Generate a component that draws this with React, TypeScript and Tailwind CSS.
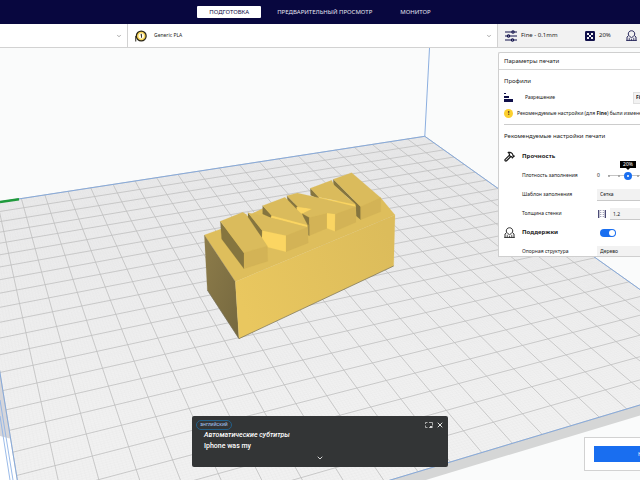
import { ChevronDown, Hammer, X } from "lucide-react";
import type { ReactNode } from "react";

type Point = [number, number];

/* Screen corners of the 220 mm build plate and its perspective coefficients. */
const BACK: Point = [424.8, 136.3];
const LEFT: Point = [-27, 206];
const FRONT: Point = [34.6, 587];
const RIGHT: Point = [754, 370.7];

const d1: Point = [LEFT[0] - FRONT[0], LEFT[1] - FRONT[1]];
const d2: Point = [RIGHT[0] - FRONT[0], RIGHT[1] - FRONT[1]];
const sum: Point = [
  BACK[0] - LEFT[0] + FRONT[0] - RIGHT[0],
  BACK[1] - LEFT[1] + FRONT[1] - RIGHT[1],
];
const det = d1[0] * d2[1] - d2[0] * d1[1];
const g = (sum[0] * d2[1] - d2[0] * sum[1]) / det;
const h = (d1[0] * sum[1] - sum[0] * d1[1]) / det;

function project(u: number, v: number): string {
  const w = 1 + g * u + h * v;
  const x = BACK[0] + (LEFT[0] - BACK[0] + g * LEFT[0]) * u + (RIGHT[0] - BACK[0] + h * RIGHT[0]) * v;
  const y = BACK[1] + (LEFT[1] - BACK[1] + g * LEFT[1]) * u + (RIGHT[1] - BACK[1] + h * RIGHT[1]) * v;
  return `${(x / w).toFixed(2)} ${(y / w).toFixed(2)}`;
}

function gridPath(cells: number): string {
  const parts: string[] = [];
  for (let i = 0; i <= cells; i++) {
    const t = i / cells;
    parts.push(`M${project(t, 0)}L${project(t, 1)}M${project(0, t)}L${project(1, t)}`);
  }
  return parts.join("");
}

const MAJOR = gridPath(22);
const MINOR = gridPath(220);

const BASE = "#debe5c";
const TOP = "#dabb5c";
const SIDE = "#d3b356";
const DARK = "#85753f";
const LIT = "#fbd562";

const MODEL: { points: string; fill: string }[] = [
  { points: "43,210 93,192 240,120 572,98 615,150 136,350", fill: BASE },
  { points: "43,210 136,350 147,521 52,375", fill: "url(#leftFace)" },
  { points: "136,350 615,150 611,303 147,521", fill: "url(#frontFace)" },
  { points: "430,43 512,125 512,164 499,153 497,118 430,60", fill: DARK },
  { points: "430,43 485,23 572,98 512,125", fill: TOP },
  { points: "512,125 572,98 572,140 512,164", fill: SIDE },
  { points: "361,70 388,96 386,102 362,91", fill: DARK },
  { points: "361,70 425,46 432,60 495,118 386,97", fill: TOP },
  { points: "386,97 495,119 497,126 388,102", fill: LIT },
  { points: "291,92 322,124 320,138 293,112", fill: DARK },
  { points: "320,126 367,131 337,146 320,137", fill: LIT },
  { points: "291,92 322,84 385,98 497,125 436,148 408,144 358,158 337,146 367,132 322,124", fill: TOP },
  { points: "337,146 358,158 358,212 353,183 338,167", fill: DARK },
  { points: "358,158 411,145 411,190 358,212", fill: SIDE },
  { points: "411,145 436,148 435,199 411,190", fill: LIT },
  { points: "436,148 497,125 498,172 435,199", fill: SIDE },
  { points: "218,122 245,151 243,158 218,147", fill: DARK },
  { points: "218,122 285,97 337,150 353,181 245,152", fill: TOP },
  { points: "245,152 353,181 353,187 243,158", fill: LIT },
  { points: "353,181 358,178 358,212 354,210", fill: "#a38e4c" },
  { points: "174,143 217,197 216,219 174,165", fill: DARK },
  { points: "174,143 205,150 270,165 352,187 288,212 217,197", fill: TOP },
  { points: "217,197 288,212 288,260 232,246 216,219", fill: LIT },
  { points: "288,212 352,187 355,234 288,260", fill: SIDE },
  { points: "91,169 162,264 162,311 95,222", fill: DARK },
  { points: "91,169 158,142 168,148 232,243 162,264", fill: TOP },
  { points: "162,264 232,243 233,289 162,311", fill: SIDE },
];

function Scene() {
  return (
    <svg
      className="absolute inset-0 h-full w-full"
      viewBox="0 48 640 432"
      preserveAspectRatio="xMinYMin slice"
      role="img"
      aria-label="3D"
    >
      <defs>
        <linearGradient id="leftFace" x1="0" y1="0" x2="1" y2="1">
          <stop offset="0" stopColor="#8d7c4a" />
          <stop offset="1" stopColor="#75683f" />
        </linearGradient>
        <linearGradient id="frontFace" x1="0" y1="0.6" x2="1" y2="0.3">
          <stop offset="0" stopColor="#e9c75f" />
          <stop offset="1" stopColor="#dcbc5b" />
        </linearGradient>
        <linearGradient id="plate" x1="0" y1="0" x2="0" y2="1">
          <stop offset="0" stopColor="#eaeaeb" />
          <stop offset="0.6" stopColor="#f1f1f1" />
        </linearGradient>
      </defs>
      <rect y="48" width="640" height="432" fill="#fafbfb" />
      <path d="M0 436L14 440L18 480H0Z" fill="#ffffff" />
      <path d="M0 373L0 436L12 439L14 460Z" fill="#d6d6da" />
      <path d="M754 370.7V381L34.6 598V587Z" fill="#d5d6d6" />
      <path d={`M${BACK}L${RIGHT}L${FRONT}L${LEFT}Z`} fill="url(#plate)" />
      <path d={MINOR} stroke="#d9d9d9" strokeWidth="0.3" fill="none" opacity="0.35" />
      <path d={MAJOR} stroke="#bfbfbf" strokeWidth="0.8" fill="none" />
      <path
        d={`M${BACK}L${RIGHT}L${FRONT}L${LEFT}ZM${BACK}L429.5 48`}
        stroke="#7fa6dc"
        strokeWidth="0.9"
        fill="none"
      />
      <path d="M0 400L13 480M0 416L10 480" stroke="#8fb3e6" strokeWidth="0.9" fill="none" />
      <path d="M0 202L19 199.3" stroke="#1f9a3c" strokeWidth="2.4" />
      <g transform="translate(190 165) scale(0.33333)">
        {MODEL.map((face) => (
          <polygon key={face.points} points={face.points} fill={face.fill} stroke={face.fill} strokeWidth="0.6" />
        ))}
        <path d="M52 375L147 521L611 303" fill="none" stroke="#6f6a52" strokeWidth="2" />
      </g>
    </svg>
  );
}

function SlidersIcon() {
  return (
    <svg className="h-3 w-3 shrink-0" viewBox="0 0 24 24" fill="none" stroke="#10104a" strokeWidth="2.2">
      <path d="M0 4H24M0 12H24M0 20H24" />
      <g fill="#10104a" stroke="none">
        <circle cx="16" cy="4" r="3.4" />
        <circle cx="7" cy="12" r="3.4" />
        <circle cx="15" cy="20" r="3.4" />
      </g>
      <circle cx="16" cy="4" r="1" fill="#f2f2f2" stroke="none" />
      <circle cx="7" cy="12" r="1" fill="#f2f2f2" stroke="none" />
      <circle cx="15" cy="20" r="1" fill="#f2f2f2" stroke="none" />
    </svg>
  );
}

function InfillIcon() {
  return (
    <svg className="h-[10px] w-[10px] shrink-0" viewBox="0 0 20 20">
      <rect width="20" height="20" rx="2.5" fill="#10104a" />
      <g fill="#f2f2f2">
        <rect x="8" y="8" width="4" height="4" />
        <rect x="4" y="4" width="4" height="4" />
        <rect x="12" y="4" width="4" height="4" />
        <rect x="4" y="12" width="4" height="4" />
        <rect x="12" y="12" width="4" height="4" />
      </g>
    </svg>
  );
}

function SupportIcon({ color }: { color: string }) {
  return (
    <svg className="h-[11px] w-[11px] shrink-0" viewBox="0 0 22 22" fill="none" stroke={color} strokeWidth="1.8">
      <path d="M11 1.500C15 1.500 17.500 4.500 17.500 8C17.500 10 16.500 11.500 15 12.500L11 15.500L7 12.500C5.500 11.500 4.500 10 4.500 8C4.500 4.500 7 1.500 11 1.500Z" />
      <path d="M0.500 20.800H21.500M5 11.500L2 14V21M17 11.500L20 14V21" />
      <path d="M6.500 15.500V21M11 18V21M15.500 15.500V21" strokeWidth="1.400" />
    </svg>
  );
}

function SpoolIcon() {
  return (
    <svg className="h-3 w-3 shrink-0" viewBox="0 0 24 24">
      <path d="M1.500 23V12" stroke="#2a2618" strokeWidth="2" />
      <circle cx="12.500" cy="12" r="9.800" fill="#f7d558" stroke="#2a2618" strokeWidth="2.500" />
      <circle cx="12.500" cy="12" r="5.500" fill="#fffbe8" />
      <path d="M11 9.800L13 8.500V15.500" fill="none" stroke="#222222" strokeWidth="1.800" />
    </svg>
  );
}

function WallIcon() {
  return (
    <svg className="h-2 w-2 shrink-0" viewBox="0 0 16 16" fill="none" stroke="#10104a">
      <path d="M1.500 0V16M14.500 0V16" strokeWidth="2" />
      <path d="M5.500 0V16M10.500 0V16" strokeWidth="1" strokeDasharray="2 2" />
    </svg>
  );
}

function Row({ icon, children }: { icon?: ReactNode; children: ReactNode }) {
  return (
    <div className="flex h-[19px] items-center">
      <span className="flex w-[18px] shrink-0 items-center">{icon}</span>
      {children}
    </div>
  );
}

const LABEL = "w-[75px] shrink-0 text-[5px]";
const FIELD = "h-3 w-24 appearance-none border-b border-[#c9c9c9] bg-[#f2f2f2] px-[3px] pt-px text-[5px]";

function SettingsPanel() {
  return (
    <section className="ml-auto w-[142px] overflow-hidden rounded-tl-xs border border-r-0 border-[#cfcfcf] bg-white whitespace-nowrap text-[#1a1a1a]">
      <h2 className="flex h-[17px] items-center border-b border-[#d6d6d6] pl-[5px] text-[6px]">Параметры печати</h2>
      <div className="h-[186px] w-64 overflow-hidden pl-[5px]">
        <h3 className="flex h-[22px] items-center text-[6px]">Профили</h3>
        <div className="flex h-[11px] items-center">
          <svg className="mr-3 h-[9px] w-[9px] shrink-0" viewBox="0 0 9 9" fill="#10104a">
            <path d="M0 0H2V1H0ZM0 3H5V5H0ZM0 6H9V9H0Z" />
          </svg>
          <label htmlFor="resolution" className="w-[108px] shrink-0 text-[5px]">
            Разрешение
          </label>
          <select
            id="resolution"
            className="h-3 w-16 appearance-none border border-[#e0e0e0] bg-[#f2f2f2] px-[2px] text-[5px] font-bold"
          >
            <option>Fine</option>
          </select>
        </div>
        <p className="flex h-[21px] items-center gap-1 text-[5px]">
          <span className="flex h-[9px] w-[9px] items-center justify-center rounded-full bg-[#fcd02f] text-[6px] font-bold">
            !
          </span>
          <span>
            Рекомендуемые настройки (для <b>Fine</b>) были изменены.
          </span>
        </p>
        <h3 className="flex h-[23px] items-center border-t border-[#cccccc] text-[6px]">
          Рекомендуемые настройки печати
        </h3>
        <Row icon={<Hammer className="h-[11px] w-[11px]" strokeWidth={2.6} />}>
          <h4 className="text-[6px] font-bold">Прочность</h4>
        </Row>
        <Row>
          <label htmlFor="density" className={LABEL}>
            Плотность заполнения
          </label>
          <span className="w-2 shrink-0 text-[5px]">0</span>
          <div className="relative h-2 w-[103px] shrink-0">
            <div className="absolute inset-x-[3px] top-[3px] flex h-[2px] items-center justify-between bg-[linear-gradient(#c4c4c4,#c4c4c4)] bg-[length:100%_1px] bg-center bg-no-repeat">
              {Array.from({ length: 11 }, (_, i) => (
                <span key={i} className="h-[2px] w-[2px] rounded-full bg-[#9a9a9a]" />
              ))}
            </div>
            <input
              id="density"
              type="range"
              min={0}
              max={100}
              defaultValue={20}
              className="absolute inset-0 h-2 w-full appearance-none bg-transparent [&::-webkit-slider-thumb]:h-2 [&::-webkit-slider-thumb]:w-2 [&::-webkit-slider-thumb]:appearance-none [&::-webkit-slider-thumb]:rounded-full [&::-webkit-slider-thumb]:border-[3px] [&::-webkit-slider-thumb]:border-[#196ef0] [&::-webkit-slider-thumb]:bg-white"
            />
            <output
              htmlFor="density"
              className="absolute bottom-3 left-[15px] flex h-[7px] w-4 items-center justify-center bg-black text-[5px] leading-[7px] text-white after:absolute after:top-full after:border-x-2 after:border-t-2 after:border-x-transparent after:border-t-black"
            >
              20%
            </output>
          </div>
        </Row>
        <Row>
          <label htmlFor="pattern" className={LABEL}>
            Шаблон заполнения
          </label>
          <select id="pattern" className={FIELD}>
            <option>Сетка</option>
          </select>
        </Row>
        <Row>
          <label htmlFor="walls" className={LABEL}>
            Толщина стенки
          </label>
          <span className="flex w-[13px] shrink-0 pl-px">
            <WallIcon />
          </span>
          <input id="walls" defaultValue="1.2" className={FIELD} />
        </Row>
        <Row icon={<SupportIcon color="#1a1a1a" />}>
          <label htmlFor="supports" className="w-[78px] shrink-0 text-[6px] font-bold">
            Поддержки
          </label>
          <input
            id="supports"
            type="checkbox"
            defaultChecked
            className="flex h-2 w-4 appearance-none items-center justify-end rounded-full bg-[#196ef0] px-px before:h-[6px] before:w-[6px] before:rounded-full before:bg-white"
          />
        </Row>
        <Row>
          <label htmlFor="structure" className={LABEL}>
            Опорная структура
          </label>
          <select id="structure" className={FIELD}>
            <option>Дерево</option>
          </select>
        </Row>
      </div>
    </section>
  );
}

function Captions() {
  return (
    <aside className="absolute bottom-[13px] left-1/2 h-[51px] w-64 -translate-x-1/2 rounded-xs bg-[#333536] px-1 pt-1 font-[family-name:Roboto,sans-serif] text-white">
      <div className="flex h-[10px] items-center">
        <span className="flex h-[10px] w-[36px] items-center justify-center rounded-full border border-[#23608a] text-[5px] text-[#a9c7f5]">
          английский
        </span>
        <button type="button" aria-label="Развернуть" className="ml-auto">
          <svg className="h-2 w-2" viewBox="0 0 16 16" fill="none" stroke="#d4d4d4" strokeWidth="1.500">
            <path d="M1 6V3H5M8 3H15V9M1 9V13H5M8 13H10" />
            <rect x="10" y="10" width="5" height="4" fill="#d4d4d4" stroke="none" />
          </svg>
        </button>
        <button type="button" aria-label="Закрыть" className="ml-[3px]">
          <X className="h-2 w-2" strokeWidth={2.6} />
        </button>
      </div>
      <p className="pl-2 text-[7px] leading-[11px] font-medium italic">Автоматические субтитры</p>
      <p className="pl-2 text-[7px] leading-[11px] font-medium">Iphone was my</p>
      <button type="button" aria-label="Ещё" className="mx-auto mt-[2px] block">
        <ChevronDown className="h-2 w-2" strokeWidth={2.4} />
      </button>
    </aside>
  );
}

export default function App() {
  return (
    <div className="flex min-h-screen flex-col overflow-hidden bg-white font-['Noto_Sans','Open_Sans',sans-serif] text-[#1a1a1a]">
      <header className="bg-[#08073f]">
        <nav className="flex h-6 items-center justify-center gap-1 text-[6px] text-[#e6e6f2]">
          <button type="button" className="h-3 rounded-[1px] bg-white px-3 text-[#08073f]">
            ПОДГОТОВКА
          </button>
          <button type="button" className="h-3 px-3">
            ПРЕДВАРИТЕЛЬНЫЙ ПРОСМОТР
          </button>
          <button type="button" className="h-3 px-3">
            МОНИТОР
          </button>
        </nav>
      </header>
      <div className="flex h-6 border-b border-[#d2d2d2] bg-white whitespace-nowrap">
        <button type="button" aria-label="Принтер" className="flex w-1/5 items-center justify-end border-r border-[#d2d2d2] pr-[5px]">
          <ChevronDown className="h-[6px] w-[6px] text-[#555555]" />
        </button>
        <button type="button" className="flex flex-1 items-center gap-[7px] border-r border-[#d2d2d2] pr-[5px] pl-[7px] text-[5px]">
          <SpoolIcon />
          Generic PLA
          <ChevronDown className="ml-auto h-[6px] w-[6px] text-[#555555]" />
        </button>
        <button type="button" className="flex w-[142px] items-center overflow-hidden bg-[#f2f2f2] pl-[7px] text-[6px]">
          <SlidersIcon />
          <span className="w-[68px] shrink-0 pl-1 text-left">Fine - 0.1mm</span>
          <InfillIcon />
          <span className="w-[31px] shrink-0 pl-1 text-left">20%</span>
          <SupportIcon color="#10104a" />
        </button>
      </div>
      <main className="relative flex-1 pt-1">
        <Scene />
        <div className="relative">
          <SettingsPanel />
        </div>
        <Captions />
        <div className="absolute right-0 bottom-[9px] w-14 overflow-hidden rounded-l-[1px] border border-r-0 border-[#d2d2d2] bg-white py-2 pl-[9px]">
          <button type="button" className="flex h-4 w-32 items-center bg-[#196ef0] pl-11 text-[6px] whitespace-nowrap text-white">
            Нарезка на слои
          </button>
        </div>
      </main>
    </div>
  );
}
